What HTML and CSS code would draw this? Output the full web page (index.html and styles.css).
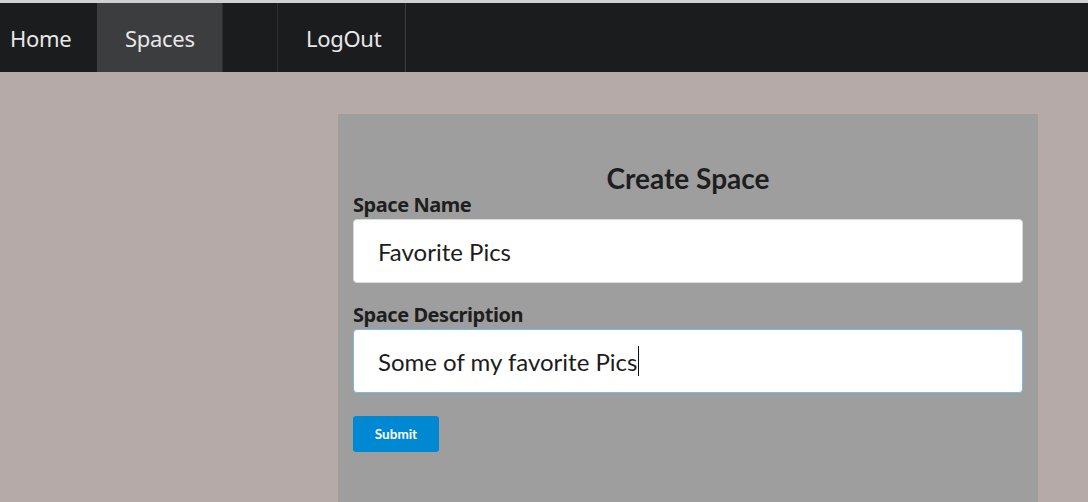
FILE: index.html
```html
<!DOCTYPE html>
<html>
<head>
<meta charset="utf-8">
<link rel="stylesheet" href="styles.css">
</head>
<body>
<div class="topline"></div>
<nav class="nav">
  <a class="nav-item home">Home</a>
  <a class="nav-item spaces active">Spaces</a>
  <span class="nav-gap"></span>
  <a class="nav-item logout">LogOut</a>
</nav>
<main class="main">
  <section class="card">
    <h1 class="title">Create Space</h1>
    <form class="form">
      <label class="label">Space Name</label>
      <div class="input">Favorite Pics</div>
      <label class="label label-2">Space Description</label>
      <div class="input focused">Some of my favorite Pics<span class="caret"></span></div>
      <button type="button" class="submit">Submit</button>
    </form>
  </section>
</main>
</body>
</html>
```

FILE: styles.css
```css
html, body {
  margin: 0;
  padding: 0;
  height: 100%;
}
body {
  background: #b6aaa9;
  font-family: Lato, "Liberation Sans", sans-serif;
  overflow: hidden;
}
.topline {
  height: 3px;
  background: #d0d0d0;
}
.nav {
  display: flex;
  height: 69px;
  background: #1b1c1e;
}
.nav-item {
  display: flex;
  align-items: center;
  color: #e8e8e8;
  font-family: "Noto Sans", "Open Sans", sans-serif;
  font-size: 22px;
  letter-spacing: -0.3px;
  text-decoration: none;
}
.home {
  width: 97px;
  padding-left: 10px;
  box-sizing: border-box;
}
.spaces {
  width: 126px;
  padding-left: 28px;
  box-sizing: border-box;
  background: #3c3d3f;
  border-right: 1px solid #2c2d2f;
}
.nav-gap {
  width: 54px;
  border-right: 1px solid #2e2f31;
}
.logout {
  width: 128px;
  padding-left: 28px;
  box-sizing: border-box;
  border-right: 1px solid #3a3b3d;
}
.main {
  padding-top: 42px;
  padding-left: 338px;
}
.card {
  width: 700px;
  height: calc(100vh - 114px);
  box-sizing: border-box;
  background: #9e9e9e;
  padding: 47px 15px 0 15px;
}
.title {
  margin: 0;
  text-align: center;
  font-size: 28px;
  font-weight: 700;
  color: #1e1e1e;
  line-height: 34px;
}
.form {
  display: flex;
  flex-direction: column;
  align-items: flex-start;
}
.label {
  font-family: "Noto Sans", "Open Sans", sans-serif;
  font-weight: 700;
  font-size: 20px;
  letter-spacing: -0.45px;
  color: #1e1e1e;
  line-height: 24px;
  margin-top: -2px;
  height: 26px;
}
.label-2 {
  margin-top: 20px;
}
.input {
  width: 670px;
  height: 64px;
  box-sizing: border-box;
  background: #fff;
  border: 1px solid #dcdcdc;
  border-radius: 4px;
  padding-left: 24px;
  display: flex;
  align-items: center;
  font-size: 24px;
  color: #1c1c1c;
}
.focused {
  border-color: #7ab9e3;
}
.caret {
  display: inline-block;
  width: 1px;
  height: 30px;
  background: #111;
  margin-left: 1px;
}
.submit {
  margin-top: 23px;
  width: 86px;
  height: 36px;
  border: none;
  border-radius: 3px;
  background: #0088d2;
  color: #fff;
  font-family: Lato, sans-serif;
  font-weight: 700;
  font-size: 13.5px;
}
```
